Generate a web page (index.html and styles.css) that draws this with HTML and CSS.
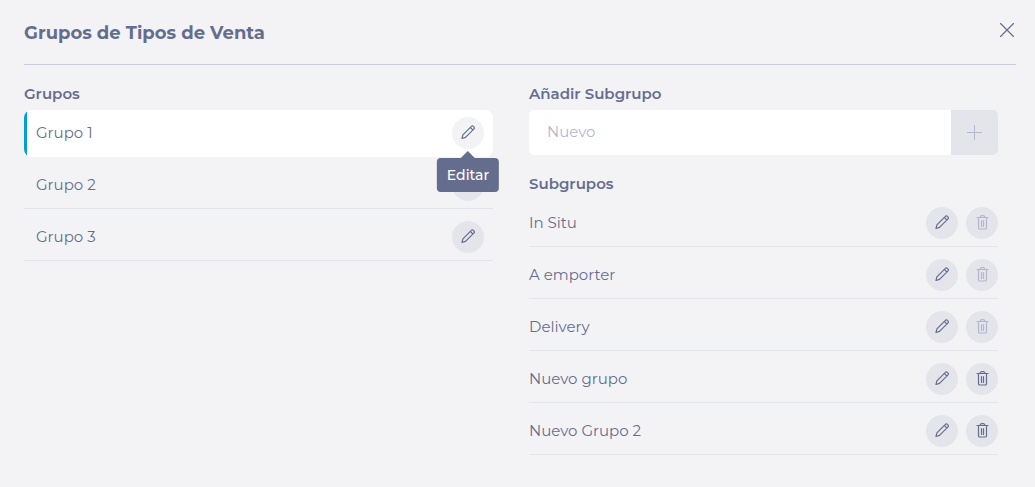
FILE: index.html
```html
<!DOCTYPE html>
<html lang="es">
<head>
<meta charset="utf-8">
<meta name="viewport" content="width=device-width, initial-scale=1">
<title>Grupos de Tipos de Venta</title>
<link rel="stylesheet" href="styles.css">
</head>
<body>
<svg class="sprite" aria-hidden="true">
  <symbol id="pencil" viewBox="0 0 16 16">
    <path d="M2 13.500l.9-3.700L11.400 1.300a1.300 1.300 0 0 1 1.900 0l.7.7a1.300 1.300 0 0 1 0 1.900L5.500 12.400zM10.300 2.400l2.600 2.600"/>
  </symbol>
  <symbol id="trash" viewBox="0 0 16 16">
    <path d="M3 2.500h11M6 2.500c0-1.200.5-1.900 1.700-1.900h1.600c1.200 0 1.700.7 1.700 1.900M4.500 2.500v10.200c0 .8.500 1.300 1.300 1.300h5.400c.8 0 1.300-.5 1.300-1.300V2.500M7.500 5.500v6M9.500 5.500v6"/>
  </symbol>
</svg>
<main class="dialog">
  <header class="dialog-header">
    <h1 class="title">Grupos de Tipos de Venta</h1>
    <button class="close" type="button" aria-label="Cerrar"><svg class="close-icon" viewBox="0 0 14 14"><path d="M.5.5l13 13M13.500.5l-13 13"/></svg></button>
  </header>
  <div class="columns">
    <section class="column">
      <h2 class="label">Grupos</h2>
      <ul class="list groups">
        <li class="row selected"><span>Grupo 1</span>
          <span class="tip-anchor">
            <button class="action" type="button" aria-label="Editar Grupo 1" aria-describedby="tip"><svg class="icon"><use href="#pencil"/></svg></button>
            <span class="tooltip" role="tooltip" id="tip">Editar</span>
          </span>
        </li>
        <li class="row"><span>Grupo 2</span><button class="action" type="button" aria-label="Editar Grupo 2"><svg class="icon"><use href="#pencil"/></svg></button></li>
        <li class="row"><span>Grupo 3</span><button class="action" type="button" aria-label="Editar Grupo 3"><svg class="icon"><use href="#pencil"/></svg></button></li>
      </ul>
    </section>
    <section class="column">
      <label class="label" for="new-subgroup">Añadir Subgrupo</label>
      <form class="add">
        <input class="add-input" id="new-subgroup" type="text" placeholder="Nuevo">
        <button class="add-button" type="button" aria-label="Añadir" disabled><svg class="plus-icon" viewBox="0 0 15 15"><path d="M7.500.5v14M.5 7.500h14"/></svg></button>
      </form>
      <h2 class="label list-label">Subgrupos</h2>
      <ul class="list">
        <li class="row"><span>In Situ</span><span class="actions"><button class="action" type="button" aria-label="Editar In Situ"><svg class="icon"><use href="#pencil"/></svg></button><button class="action" type="button" aria-label="Eliminar In Situ" disabled><svg class="icon"><use href="#trash"/></svg></button></span></li>
        <li class="row"><span>A emporter</span><span class="actions"><button class="action" type="button" aria-label="Editar A emporter"><svg class="icon"><use href="#pencil"/></svg></button><button class="action" type="button" aria-label="Eliminar A emporter" disabled><svg class="icon"><use href="#trash"/></svg></button></span></li>
        <li class="row"><span>Delivery</span><span class="actions"><button class="action" type="button" aria-label="Editar Delivery"><svg class="icon"><use href="#pencil"/></svg></button><button class="action" type="button" aria-label="Eliminar Delivery" disabled><svg class="icon"><use href="#trash"/></svg></button></span></li>
        <li class="row"><span>Nuevo grupo</span><span class="actions"><button class="action" type="button" aria-label="Editar Nuevo grupo"><svg class="icon"><use href="#pencil"/></svg></button><button class="action" type="button" aria-label="Eliminar Nuevo grupo"><svg class="icon"><use href="#trash"/></svg></button></span></li>
        <li class="row"><span>Nuevo Grupo 2</span><span class="actions"><button class="action" type="button" aria-label="Editar Nuevo Grupo 2"><svg class="icon"><use href="#pencil"/></svg></button><button class="action" type="button" aria-label="Eliminar Nuevo Grupo 2"><svg class="icon"><use href="#trash"/></svg></button></span></li>
      </ul>
    </section>
  </div>
</main>
</body>
</html>
```
FILE: styles.css
```css
* { box-sizing: border-box; }

body {
  margin: 0;
  background: #f3f3f5;
  color: #656d8f;
  font: 400 15px/20px Montserrat, Inter, "Open Sans", sans-serif;
}

button, input { font: inherit; color: inherit; border: 0; padding: 0; }
button { cursor: pointer; }
button:disabled { cursor: default; color: #b5b6cf; }

svg { fill: none; stroke: currentColor; stroke-linecap: round; stroke-linejoin: round; }
.sprite { position: absolute; width: 0; height: 0; }

.dialog { padding: 0 19px 24px 24px; }

.dialog-header {
  display: flex;
  align-items: flex-start;
  justify-content: space-between;
  height: 65px;
  padding-top: 20px;
  border-bottom: 1px solid #cbcbdc;
}

.title { margin: 0; font-size: 18px; line-height: 26px; font-weight: 700; }

.close {
  display: grid;
  place-items: center;
  width: 18px;
  height: 20px;
  background: none;
}
.close-icon { width: 14px; height: 14px; stroke-width: 1.2; }

.columns {
  display: grid;
  grid-template-columns: 1fr 1fr;
  gap: 36px;
  padding: 19px 18px 0 0;
}

.label {
  display: block;
  margin: 0;
  padding-bottom: 6px;
  font-size: 15px;
  line-height: 20px;
  font-weight: 600;
}
.list-label { padding-bottom: 1px; }

.list { margin: 0; padding: 0; list-style: none; }

.row {
  display: flex;
  align-items: center;
  justify-content: space-between;
  padding: 12px 0 7px;
  border-bottom: 1px solid #e4e4eb;
}
.groups .row { padding-left: 12px; padding-right: 9px; }
.groups .selected {
  padding-top: 7px;
  padding-bottom: 8px;
  border-bottom: 0;
  border-radius: 8px;
  background: linear-gradient(to right, #009fda 3px, #fff 3px);
}

.actions { display: flex; gap: 8px; }

.action {
  display: grid;
  place-items: center;
  width: 32px;
  height: 32px;
  border-radius: 50%;
  background: #e4e4eb;
}
.selected .action { background: #f3f3f5; }
.icon { width: 16px; height: 16px; stroke-width: 1.2; }

.tip-anchor { position: relative; }
.tooltip {
  position: absolute;
  z-index: 1;
  top: 41px;
  left: 50%;
  transform: translateX(-50%);
  padding: 7px 10px;
  border-radius: 4px;
  background: #656d8f;
  color: #fff;
  font-size: 14px;
  font-weight: 500;
}
.tooltip::before {
  content: "";
  position: absolute;
  bottom: 100%;
  left: 50%;
  margin-left: -7px;
  border: 7px solid transparent;
  border-top: 0;
  border-bottom-color: #656d8f;
}

.add {
  display: flex;
  height: 45px;
  margin-bottom: 19px;
  border-radius: 5px;
  overflow: hidden;
}
.add-input { flex: 1; min-width: 0; padding: 0 18px 2px; background: #fff; }
.add-input::placeholder { color: #b5b6cf; opacity: 1; }
.add-button {
  display: grid;
  place-items: center;
  width: 47px;
  background: #e4e4eb;
}
.plus-icon { width: 15px; height: 15px; }
```
